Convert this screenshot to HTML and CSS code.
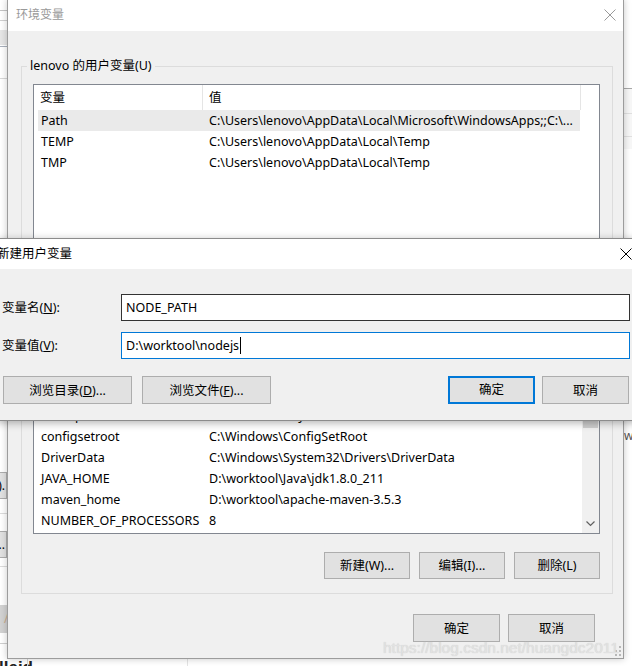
FILE: index.html
```html
<!DOCTYPE html>
<html lang="zh-CN">
<head>
<meta charset="utf-8">
<title>环境变量</title>
<link rel="stylesheet" href="styles.css">
</head>
<body>
<div class="desk">
  <div class="bg bg-l1"></div>
  <div class="bg bg-l2"></div>
  <div class="bg bg-l3"></div>
  <div class="bg bg-l4"></div>
  <div class="bg bg-l5"></div>
  <div class="bg bg-btn bg-b1">).</div>
  <div class="bg bg-l6"></div>
  <div class="bg bg-btn bg-b2">...</div>
  <div class="bg bg-l7"></div>
  <div class="bg bg-b3">/</div>
  <div class="bg bg-l8"></div>
  <div class="bg bg-r1"></div>
  <div class="bg bg-r2"></div>
  <div class="bg bg-r3"></div>
  <div class="bg bg-r4"></div>
  <div class="bg bg-rw">w</div>
  <div class="bg bg-bottom">lleid</div>
  <div class="bg bg-v1"></div>
  <div class="bg bg-v2"></div>

  <section class="win env">
    <header class="titlebar">
      <span class="title">环境变量</span>
      <svg class="close" width="12" height="12" viewBox="0 0 12 12"><path d="M0.5 0.5 L11.5 11.5 M11.5 0.5 L0.5 11.5" stroke="#999" stroke-width="1" fill="none"/></svg>
    </header>
    <div class="env-body">
      <fieldset class="group">
        <legend>lenovo 的用户变量(U)</legend>
        <div class="listbox">
          <div class="lhead"><span class="c1">变量</span><span class="c2">值</span><span class="c3"></span></div>
          <div class="rows">
            <div class="row sel"><span class="k">Path</span><span class="v">C:\Users\lenovo\AppData\Local\Microsoft\WindowsApps;;C:\...</span></div>
            <div class="row"><span class="k">TEMP</span><span class="v">C:\Users\lenovo\AppData\Local\Temp</span></div>
            <div class="row"><span class="k">TMP</span><span class="v">C:\Users\lenovo\AppData\Local\Temp</span></div>
          </div>
          <div class="gap"></div>
          <div class="lower">
            <div class="rows">
              <div class="row"><span class="k">ComSpec</span><span class="v">C:\WINDOWS\system32\cmd.exe</span></div>
              <div class="row"><span class="k">configsetroot</span><span class="v">C:\Windows\ConfigSetRoot</span></div>
              <div class="row"><span class="k">DriverData</span><span class="v">C:\Windows\System32\Drivers\DriverData</span></div>
              <div class="row"><span class="k">JAVA_HOME</span><span class="v">D:\worktool\Java\jdk1.8.0_211</span></div>
              <div class="row"><span class="k">maven_home</span><span class="v">D:\worktool\apache-maven-3.5.3</span></div>
              <div class="row"><span class="k">NUMBER_OF_PROCESSORS</span><span class="v">8</span></div>
            </div>
            <div class="vscroll">
              <div class="thumb"></div>
              <svg class="chev" width="9" height="9" viewBox="0 0 9 9"><path d="M0.5 2.5 L4.5 6.5 L8.5 2.5" stroke="#606060" stroke-width="1.2" fill="none"/></svg>
            </div>
          </div>
        </div>
        <div class="btnrow">
          <button class="btn">新建(W)...</button>
          <button class="btn">编辑(I)...</button>
          <button class="btn">删除(L)</button>
        </div>
      </fieldset>
      <div class="btnrow foot">
        <button class="btn">确定</button>
        <button class="btn">取消</button>
      </div>
    </div>
    <svg class="grip" width="8" height="12" viewBox="0 0 8 12"><g fill="#b8b8b8"><rect x="6" y="2" width="2" height="2"/><rect x="6" y="6" width="2" height="2"/><rect x="2" y="6" width="2" height="2"/><rect x="6" y="10" width="2" height="2"/><rect x="2" y="10" width="2" height="2"/></g></svg>
    <div class="watermark">https://blog.csdn.net/huangdc2011</div>
  </section>

  <section class="win newvar">
    <header class="titlebar2">
      <span class="title2">新建用户变量</span>
      <svg class="close" width="12" height="12" viewBox="0 0 12 12"><path d="M0.5 0.5 L11.5 11.5 M11.5 0.5 L0.5 11.5" stroke="#000" stroke-width="1" fill="none"/></svg>
    </header>
    <div class="nv-body">
      <div class="field">
        <label class="lbl">变量名(<u>N</u>):</label>
        <div class="input">NODE_PATH</div>
      </div>
      <div class="field">
        <label class="lbl">变量值(<u>V</u>):</label>
        <div class="input focus">D:\worktool\nodejs<span class="caret"></span></div>
      </div>
      <div class="nv-btns">
        <button class="btn wide">浏览目录(<u>D</u>)...</button>
        <button class="btn wide">浏览文件(<u>F</u>)...</button>
        <span class="spacer"></span>
        <button class="btn default">确定</button>
        <button class="btn">取消</button>
      </div>
    </div>
  </section>
</div>
</body>
</html>
```
FILE: styles.css
```css
* { box-sizing: border-box; }
html, body { margin: 0; padding: 0; }
body {
  width: 632px;
  height: 666px;
  overflow: hidden;
  background: #ffffff;
  font: 12.5px/16px "Noto Sans", "Noto Sans CJK SC", sans-serif;
  color: #000;
}
.desk { position: relative; width: 632px; height: 666px; overflow: hidden; }

/* background window fragments */
.bg { position: absolute; }
.bg-l1 { left: 0; top: 10px; width: 7px; height: 1px; background: #c4c4c4; }
.bg-l2 { left: 0; top: 20px; width: 7px; height: 1px; background: #d0d0d0; }
.bg-l3 { left: 0; top: 30px; width: 7px; height: 15px; background: #e6e6e6; }
.bg-l4 { left: 0; top: 46px; width: 7px; height: 1px; background: #a8b0bc; }
.bg-l5 { left: 0; top: 78px; width: 7px; height: 1px; background: #d8d8d8; }
.bg-btn { left: -40px; width: 47px; height: 27px; background: #e1e1e1; border: 1px solid #adadad; text-align: right; padding-right: 1px; line-height: 25px; font-size: 12px; overflow: hidden; }
.bg-b1 { top: 472px; }
.bg-l6 { left: 0; top: 513px; width: 7px; height: 1px; background: #dcdcdc; }
.bg-b2 { top: 531px; }
.bg-l7 { left: 0; top: 566px; width: 7px; height: 1px; background: #dcdcdc; }
.bg-b3 { left: 0; top: 605px; width: 7px; height: 28px; background: #d2d2d2; color: #c9a98a; line-height: 28px; font-size: 12px; padding-left: 4px; overflow: hidden; }
.bg-l8 { left: 0; top: 643px; width: 7px; height: 1px; background: #cfcfcf; }
.bg-r1 { left: 623px; top: 88px; width: 9px; height: 1px; background: #a8a8a8; }
.bg-r2 { left: 623px; top: 89px; width: 9px; height: 60px; background: #f7f7f7; }
.bg-r3 { left: 623px; top: 113px; width: 9px; height: 1px; background: #e0e0e0; }
.bg-r4 { left: 623px; top: 136px; width: 9px; height: 1px; background: #e0e0e0; }
.bg-rw { left: 624px; top: 428px; font-size: 12px; line-height: 16px; color: #555; }
.bg-bottom { left: -1px; top: 658px; font: bold 17px/20px "Liberation Sans", sans-serif; color: #222; }
.bg-v1 { left: 27px; top: 659px; width: 1px; height: 7px; background: #d4d4d4; }
.bg-v2 { left: 187px; top: 659px; width: 1px; height: 7px; background: #e4e4e4; }

/* windows */
.win { position: absolute; display: flex; flex-direction: column; }
.env {
  left: 7px; top: -1px; width: 617px; height: 660px;
  border: 1px solid #9c9c9c;
  background: #f0f0f0;
  box-shadow: 0 0 7px rgba(0,0,0,0.22);
}
.titlebar {
  height: 31px; flex: none;
  background: #fff;
  display: flex; align-items: center; justify-content: space-between;
  padding: 0 7px 1px 8px;
}
.title { color: #999; font-size: 12px; }
.env-body {
  flex: 1;
  padding: 27px 10px 0 13px;
  display: flex; flex-direction: column;
}
.group {
  margin: 0;
  border: 1px solid #dcdcdc;
  padding: 10px 12px 14px 11px;
  min-width: 0;
}
.group legend {
  padding: 0 3px;
  margin-left: -6px;
  line-height: 16px;
}
.listbox {
  height: 450px;
  border: 1px solid #828790;
  background: #fff;
  display: flex; flex-direction: column;
}
.lhead { height: 25px; flex: none; display: flex; line-height: 25px; }
.lhead .c1 { width: 169px; padding-left: 6px; border-right: 1px solid #e5e5e5; }
.lhead .c2 { width: 378px; padding-left: 6px; border-right: 1px solid #e5e5e5; }
.lhead .c3 { flex: 1; }
.rows { flex: none; }
.row {
  display: grid;
  grid-template-columns: 164px 378px;
  width: 542px; height: 21px; line-height: 21px;
  margin-left: 4px;
  white-space: nowrap;
}
.row .k { padding-left: 3px; overflow: hidden; }
.row .v { padding-left: 7px; overflow: hidden; }
.row.sel { background: #eaeaea; }
.gap { flex: 1; }
.lower { flex: none; height: 128px; display: flex; }
.lower .rows { width: 548px; }
.vscroll {
  width: 17px; background: #f0f0f0;
  display: flex; flex-direction: column; align-items: center; justify-content: space-between;
}
.thumb { width: 15px; height: 23px; background: #cdcdcd; }
.chev { margin-bottom: 5px; }

.btnrow { display: flex; justify-content: flex-end; gap: 9px; margin-top: 18px; }
.btn {
  font: inherit;
  width: 86px; height: 27px;
  padding: 0;
  background: #e1e1e1;
  border: 1px solid #adadad;
  color: #000;
  text-align: center;
  line-height: 25px;
}
.foot { margin-top: 20px; margin-right: 18px; gap: 8px; }
.foot .btn { width: 87px; height: 28px; }
.grip { position: absolute; right: 2px; bottom: 2px; }
.watermark {
  position: absolute; left: 375px; top: 639px;
  font: 15.5px/18px "Liberation Sans", sans-serif;
  color: #e2e2e2;
  text-shadow: 0 0 1px #c8c8c8;
  white-space: nowrap;
}

/* new variable dialog */
.newvar {
  left: -3px; top: 238px; width: 645px; height: 183px;
  border: 1px solid #8c8c8c;
  background: #f0f0f0;
  box-shadow: 0 2px 8px rgba(0,0,0,0.3);
}
.titlebar2 {
  height: 30px; flex: none; background: #fff;
  display: flex; align-items: center; justify-content: space-between;
  padding: 0 9px 0 0;
}
.title2 { margin-left: -1px; }
.nv-body { flex: 1; padding: 25px 11px 0 4px; }
.field { display: flex; align-items: center; height: 27px; margin-bottom: 11px; }
.lbl { width: 119px; flex: none; }
.input {
  flex: 1; height: 27px;
  background: #fff;
  border: 1px solid #333;
  padding-left: 4px;
  line-height: 25px;
  white-space: nowrap;
}
.input.focus { border-color: #0078d7; }
.caret { display: inline-block; width: 1px; height: 17px; background: #000; vertical-align: middle; margin-left: 1px; margin-top: -2px; }
.nv-btns { display: flex; margin-top: 17px; padding: 0 1px 0 1px; gap: 7px; }
.nv-btns .btn { height: 28px; width: 87px; }
.nv-btns .btn.wide { width: 129px; }
.nv-btns .btn.wide + .btn.wide { margin-left: 3px; }
.spacer { flex: 1; }
.btn.default { border: 2px solid #0078d7; line-height: 24px; }
```
